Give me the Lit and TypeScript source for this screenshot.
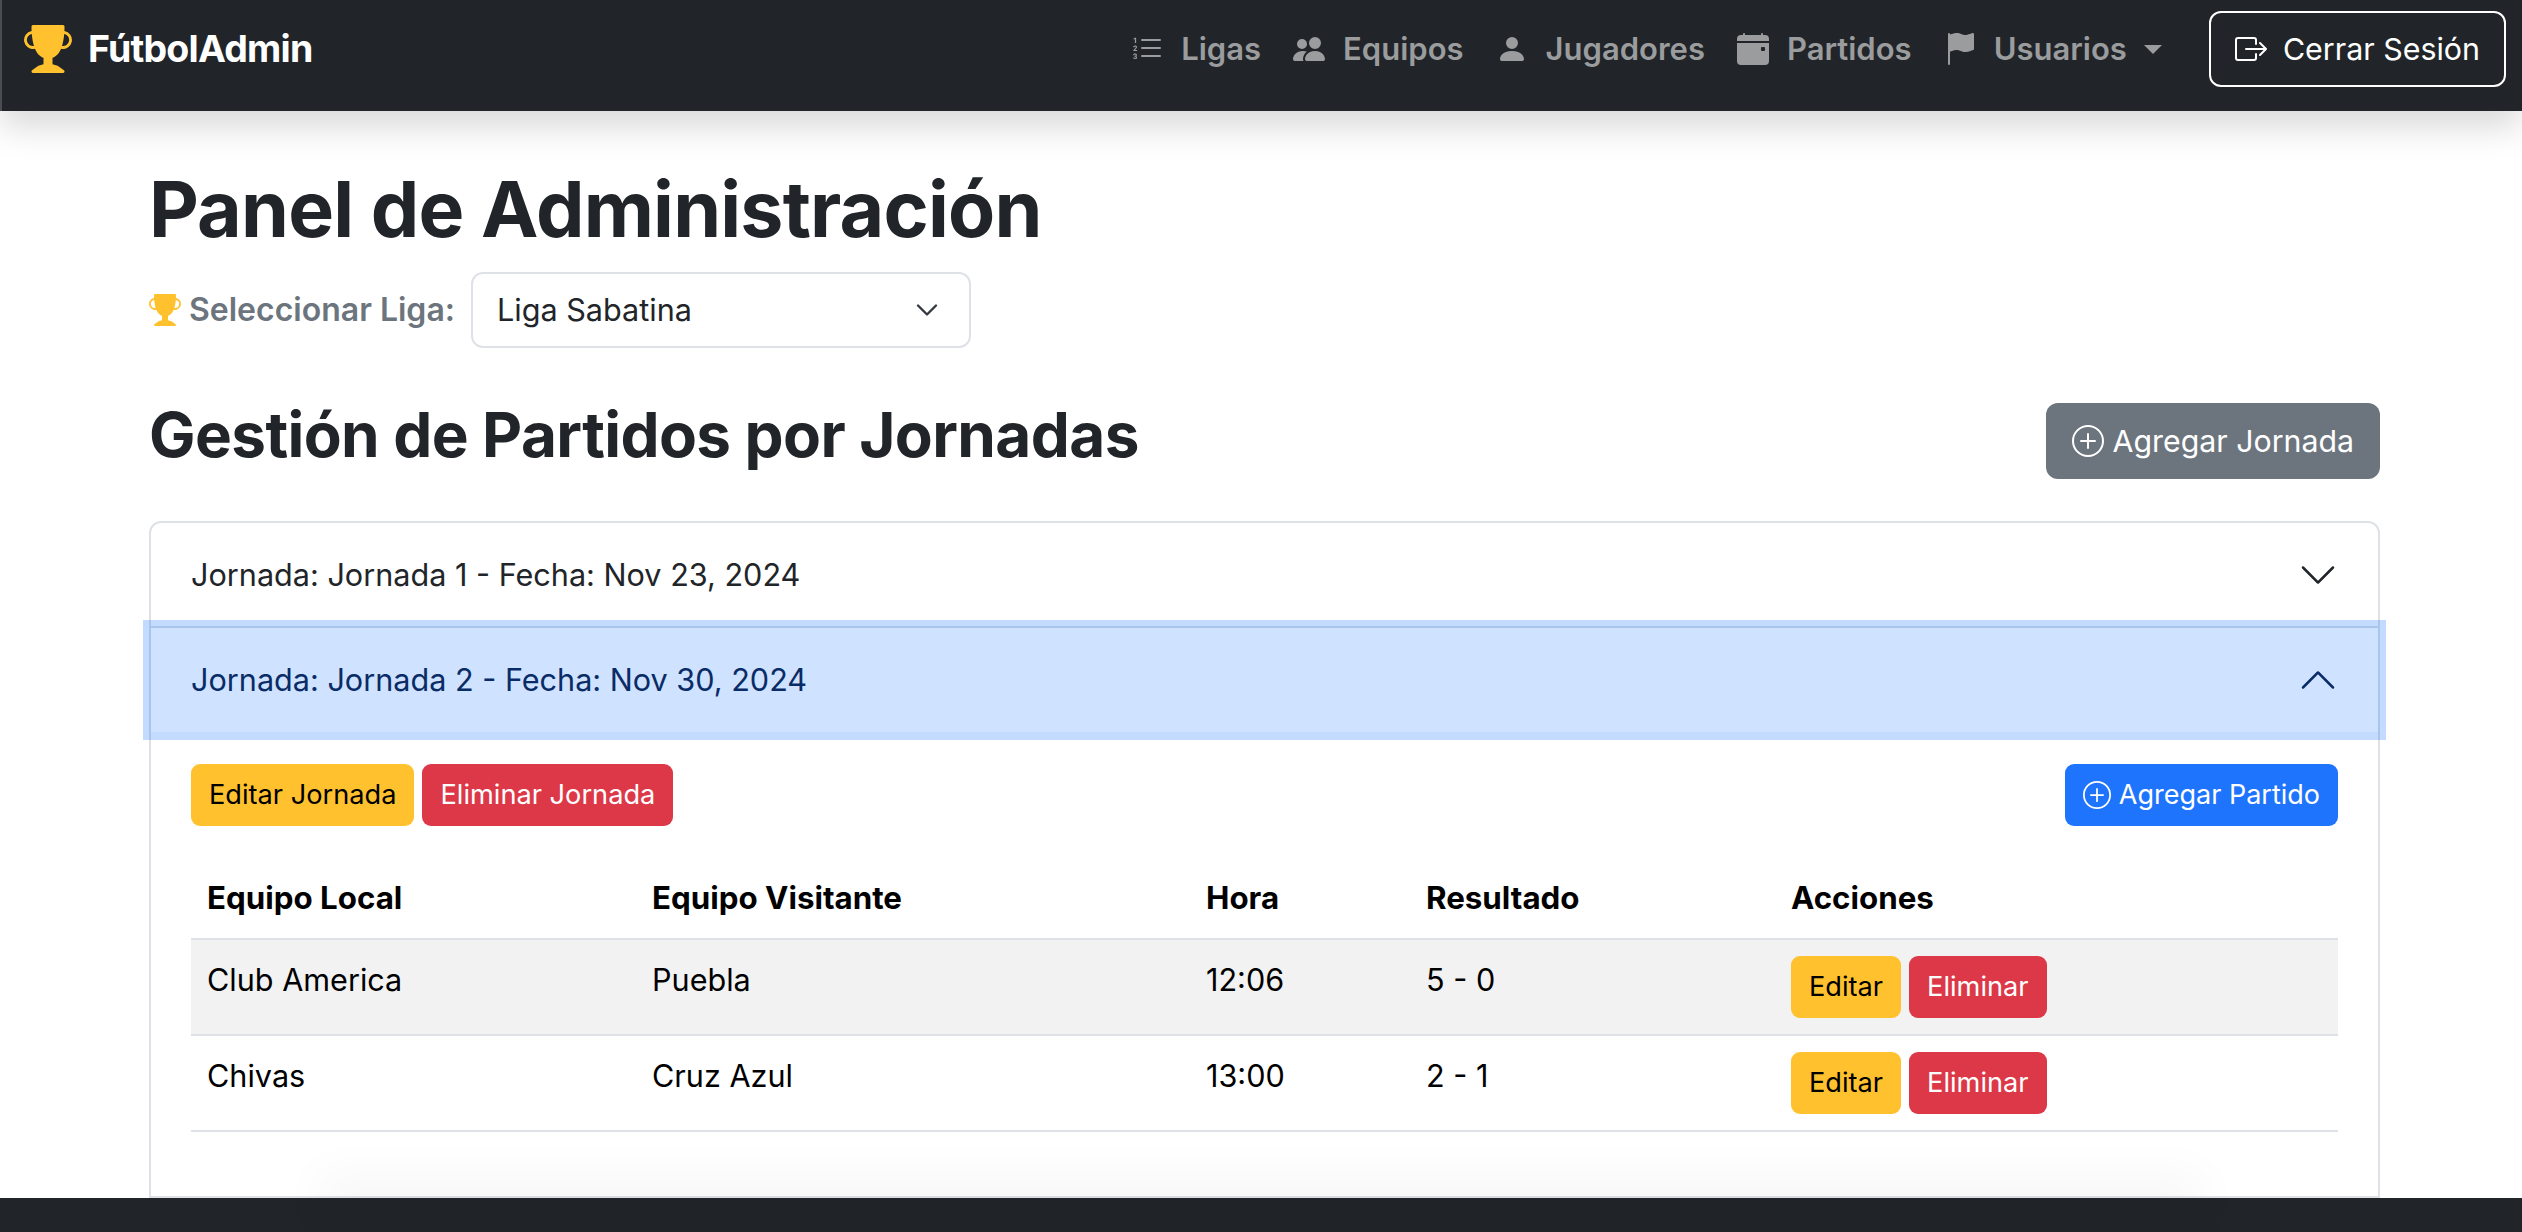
import { LitElement, html, css, svg } from 'lit';
import { customElement } from 'lit/decorators.js';

const ICONS: Record<string, string[]> = {
  trophy: ['M2.5.5A.5.5 0 0 1 3 0h10a.5.5 0 0 1 .5.5q0 .807-.034 1.536a3 3 0 1 1-1.133 5.89c-.79 1.865-1.878 2.777-2.833 3.011v2.173l1.425.356c.194.048.377.135.537.255L13.3 15.1a.5.5 0 0 1-.3.9H3a.5.5 0 0 1-.3-.9l1.838-1.379c.16-.12.343-.207.537-.255L6.5 13.11v-2.173c-.955-.234-2.043-1.146-2.833-3.012a3 3 0 1 1-1.132-5.89A33 33 0 0 1 2.5.5m.099 2.54a2 2 0 0 0 .72 3.935c-.333-1.05-.588-2.346-.72-3.935m10.083 3.935a2 2 0 0 0 .72-3.935c-.133 1.59-.388 2.885-.72 3.935'],
  list: [
    'M5 11.5a.5.5 0 0 1 .5-.5h9a.5.5 0 0 1 0 1h-9a.5.5 0 0 1-.5-.5m0-4a.5.5 0 0 1 .5-.5h9a.5.5 0 0 1 0 1h-9a.5.5 0 0 1-.5-.5m0-4a.5.5 0 0 1 .5-.5h9a.5.5 0 0 1 0 1h-9a.5.5 0 0 1-.5-.5',
    'M1.713 11.865v-.474H2c.217 0 .363-.137.363-.317 0-.185-.158-.31-.361-.31-.223 0-.367.152-.373.31h-.59c.016-.467.373-.787.986-.787.588-.002.954.291.957.703a.595.595 0 0 1-.492.594v.033a.615.615 0 0 1 .569.631c.003.533-.502.8-1.051.8-.656 0-1-.37-1.008-.794h.582c.008.178.186.306.422.309.254 0 .424-.145.422-.35-.002-.195-.155-.348-.414-.348h-.3zm-.004-4.699h-.604v-.035c0-.408.295-.844.958-.844.583 0 .96.326.96.756 0 .389-.257.617-.476.848l-.537.572v.03h1.054V9H1.143v-.395l.957-.99c.138-.142.293-.304.293-.508 0-.18-.147-.32-.342-.32a.33.33 0 0 0-.342.338zM2.564 5h-.635V2.924h-.031l-.598.42v-.567l.629-.443h.635z',
  ],
  people: ['M7 14s-1 0-1-1 1-4 5-4 5 3 5 4-1 1-1 1zm4-6a3 3 0 1 0 0-6 3 3 0 0 0 0 6m-5.784 6A2.24 2.24 0 0 1 5 13c0-1.355.68-2.75 1.936-3.72A6.3 6.3 0 0 0 5 9c-4 0-5 3-5 4s1 1 1 1zM4.5 8a2.5 2.5 0 1 0 0-5 2.5 2.5 0 0 0 0 5'],
  person: ['M3 14s-1 0-1-1 1-4 6-4 6 3 6 4-1 1-1 1zm5-6a3 3 0 1 0 0-6 3 3 0 0 0 0 6'],
  calendar: ['M4 .5a.5.5 0 0 0-1 0V1H2a2 2 0 0 0-2 2v1h16V3a2 2 0 0 0-2-2h-1V.5a.5.5 0 0 0-1 0V1H4zM16 14V5H0v9a2 2 0 0 0 2 2h12a2 2 0 0 0 2-2m-3.5-7h1a.5.5 0 0 1 .5.5v1a.5.5 0 0 1-.5.5h-1a.5.5 0 0 1-.5-.5v-1a.5.5 0 0 1 .5-.5'],
  flag: ['M14.778.085A.5.5 0 0 1 15 .5V8a.5.5 0 0 1-.314.464L14.5 8l.186.464-.003.001-.006.003-.023.009a12 12 0 0 1-.397.15c-.264.095-.631.223-1.047.35-.816.252-1.879.523-2.71.523-.847 0-1.548-.28-2.158-.525l-.028-.01C7.68 8.71 7.14 8.5 6.5 8.5c-.7 0-1.638.23-2.437.477A20 20 0 0 0 3 9.342V15.5a.5.5 0 0 1-1 0V.5a.5.5 0 0 1 1 0v.282c.226-.079.496-.17.79-.26C4.606.272 5.67 0 6.5 0c.84 0 1.524.277 2.121.519l.043.018C9.286.788 9.828 1 10.5 1c.7 0 1.638-.23 2.437-.477a20 20 0 0 0 1.349-.476l.019-.007.004-.002h.001'],
  logout: [
    'M10 12.5a.5.5 0 0 1-.5.5h-8a.5.5 0 0 1-.5-.5v-9a.5.5 0 0 1 .5-.5h8a.5.5 0 0 1 .5.5v2a.5.5 0 0 0 1 0v-2A1.5 1.5 0 0 0 9.5 2h-8A1.5 1.5 0 0 0 0 3.5v9A1.5 1.5 0 0 0 1.5 14h8a1.5 1.5 0 0 0 1.5-1.5v-2a.5.5 0 0 0-1 0z',
    'M15.854 8.354a.5.5 0 0 0 0-.708l-3-3a.5.5 0 0 0-.708.708L14.293 7.5H5.5a.5.5 0 0 0 0 1h8.793l-2.147 2.146a.5.5 0 0 0 .708.708z',
  ],
  plus: [
    'M8 15A7 7 0 1 1 8 1a7 7 0 0 1 0 14m0 1A8 8 0 1 0 8 0a8 8 0 0 0 0 16',
    'M8 4a.5.5 0 0 1 .5.5v3h3a.5.5 0 0 1 0 1h-3v3a.5.5 0 0 1-1 0v-3h-3a.5.5 0 0 1 0-1h3v-3A.5.5 0 0 1 8 4',
  ],
  chevron: ['M1.646 4.646a.5.5 0 0 1 .708 0L8 10.293l5.646-5.647a.5.5 0 0 1 .708.708l-6 6a.5.5 0 0 1-.708 0l-6-6a.5.5 0 0 1 0-.708'],
};

const icon = (name: string, cls = '') => html`<svg class="icon ${cls}" viewBox="0 0 16 16" fill="currentColor">
  ${ICONS[name].map((d) => svg`<path fill-rule="evenodd" d=${d}></path>`)}
</svg>`;

const NAV = [
  { label: 'Ligas', icon: 'list' },
  { label: 'Equipos', icon: 'people' },
  { label: 'Jugadores', icon: 'person' },
  { label: 'Partidos', icon: 'calendar' },
];

const PARTIDOS = [
  { local: 'Club America', visita: 'Puebla', hora: '12:06', res: '5 - 0' },
  { local: 'Chivas', visita: 'Cruz Azul', hora: '13:00', res: '2 - 1' },
];

@customElement('app-root')
export class AppRoot extends LitElement {
  static styles = css`
    :host {
      display: flex;
      flex-direction: column;
      height: 1232px;
      overflow: hidden;
      background: #fff;
      color: #212529;
      font-family: Inter, 'Liberation Sans', sans-serif;
      font-size: 30.6px;
      line-height: 48px;
    }
    .icon {
      width: 32px;
      height: 32px;
      flex: none;
      display: block;
    }
    .navbar {
      position: relative;
      z-index: 5;
      flex: none;
      box-sizing: border-box;
      height: 111px;
      display: flex;
      align-items: flex-start;
      padding: 11px 16px 0 22px;
      background: #212529;
      border-left: 2px solid #4a4e52;
      box-shadow: 0 16px 32px rgba(0, 0, 0, 0.15);
    }
    .brand {
      display: flex;
      align-items: center;
      gap: 16px;
      height: 76px;
      color: #fff;
      font-size: 37.5px;
      font-weight: 700;
      letter-spacing: -0.8px;
    }
    .brand .icon {
      width: 48px;
      height: 48px;
      color: #ffc12d;
    }
    .nav {
      margin-left: auto;
      display: flex;
      align-items: center;
      height: 76px;
    }
    .nav a {
      display: flex;
      align-items: center;
      gap: 18px;
      padding: 0 16px;
      color: #9a9c9e;
      font-weight: 600;
      font-size: 31px;
    }
    .caret {
      width: 0;
      height: 0;
      margin-left: -1px;
      border-top: 9px solid #9a9c9e;
      border-left: 9px solid transparent;
      border-right: 9px solid transparent;
    }
    .btn {
      display: inline-flex;
      align-items: center;
      box-sizing: border-box;
      height: 76px;
      padding: 0 24px;
      border: 2px solid transparent;
      border-radius: 12px;
      background: none;
      font: inherit;
      white-space: nowrap;
    }
    .btn-light {
      margin-left: 31px;
      gap: 16px;
      border-color: #fff;
      color: #fff;
      font-size: 30.4px;
    }
    .btn-gray {
      gap: 9px;
      background: #6c757d;
      color: #fff;
      font-size: 30.3px;
    }
    .btn-sm {
      height: 62px;
      padding: 0 16px;
      border-radius: 9px;
      font-size: 27.2px;
    }
    .btn-sm .icon {
      width: 28px;
      height: 28px;
    }
    .warn {
      background: #ffc12d;
      color: #000;
    }
    .danger {
      background: #dc3848;
      color: #fff;
    }
    .primary {
      gap: 8px;
      background: #1e74fd;
      color: #fff;
      font-size: 27px;
    }
    main {
      flex: 1;
      min-height: 0;
      padding: 50px 142px 0 149px;
    }
    h1 {
      margin: 0 0 15px;
      font-size: 77px;
      line-height: 96px;
      font-weight: 700;
      letter-spacing: -0.8px;
    }
    .liga {
      display: flex;
      align-items: center;
      height: 76px;
      margin-bottom: 55px;
      color: #6c757d;
      font-weight: 600;
      font-size: 32px;
    }
    .liga .icon {
      color: #ffc12d;
      margin-right: 8px;
    }
    .select {
      box-sizing: border-box;
      display: flex;
      align-items: center;
      justify-content: space-between;
      width: 500px;
      height: 76px;
      margin-left: 16px;
      padding: 0 30px 0 24px;
      border: 2px solid #dee2e6;
      border-radius: 12px;
      color: #212529;
      font-weight: 400;
      font-size: 30.6px;
    }
    .select svg {
      width: 24px;
      height: 24px;
      display: block;
    }
    .head {
      display: flex;
      align-items: flex-start;
      justify-content: space-between;
      margin-bottom: 42px;
    }
    h2 {
      margin: 0;
      font-size: 62px;
      line-height: 64px;
      font-weight: 700;
      letter-spacing: -0.6px;
    }
    .accordion {
      border: 2px solid #dee2e6;
      border-radius: 12px 12px 0 0;
    }
    .item + .item {
      border-top: 2px solid #dee2e6;
    }
    .acc-head {
      display: flex;
      align-items: center;
      justify-content: space-between;
      height: 103px;
      padding: 0 40px;
      box-sizing: border-box;
    }
    .acc-head .icon {
      width: 40px;
      height: 40px;
    }
    .acc-head.open {
      position: relative;
      height: 104px;
      background: #cfe2ff;
      color: #0a2c66;
      box-shadow: 0 0 0 8px rgba(13, 110, 253, 0.25);
    }
    .acc-head.open .icon {
      transform: rotate(180deg);
    }
    .acc-body {
      padding: 32px 40px;
    }
    .actions {
      display: flex;
      gap: 8px;
      margin-bottom: 32px;
    }
    .actions .primary {
      margin-left: auto;
    }
    table {
      width: 100%;
      table-layout: fixed;
      border-collapse: collapse;
      margin-bottom: 32px;
      color: #000;
    }
    th,
    td {
      box-sizing: border-box;
      padding: 16px;
      text-align: left;
      vertical-align: top;
      border-bottom: 2px solid #dee2e6;
    }
    th {
      font-weight: 700;
      font-size: 31.3px;
    }
    th:nth-child(1) { width: 445px; }
    th:nth-child(2) { width: 554px; }
    th:nth-child(3) { width: 220px; }
    th:nth-child(4) { width: 365px; }
    tbody tr:nth-child(odd) td {
      background: #f2f2f2;
    }
    .row-btns {
      display: flex;
      gap: 8px;
    }
    footer {
      position: relative;
      z-index: 6;
      flex: none;
      height: 34px;
      background: #212529;
    }
    footer::before {
      content: '';
      position: absolute;
      top: 0;
      left: 340px;
      right: 340px;
      height: 1px;
      box-shadow: 0 0 50px 20px rgba(0, 0, 0, 0.045);
    }
  `;

  render() {
    return html`
      <header class="navbar">
        <div class="brand">${icon('trophy')}<span>FútbolAdmin</span></div>
        <nav class="nav">
          ${NAV.map((n) => html`<a>${icon(n.icon)}<span>${n.label}</span></a>`)}
          <a>${icon('flag')}<span>Usuarios</span><i class="caret"></i></a>
        </nav>
        <button class="btn btn-light">${icon('logout')}Cerrar Sesión</button>
      </header>
      <main>
        <h1>Panel de Administración</h1>
        <div class="liga">
          ${icon('trophy')}<span>Seleccionar Liga:</span>
          <div class="select">
            <span>Liga Sabatina</span>
            <svg viewBox="0 0 16 16" fill="none" stroke="#343a40" stroke-width="1.6" stroke-linecap="round" stroke-linejoin="round"><path d="m2 5 6 6 6-6"></path></svg>
          </div>
        </div>
        <div class="head">
          <h2>Gestión de Partidos por Jornadas</h2>
          <button class="btn btn-gray">${icon('plus')}Agregar Jornada</button>
        </div>
        <section class="accordion">
          <div class="item">
            <div class="acc-head"><span>Jornada: Jornada 1 - Fecha: Nov 23, 2024</span>${icon('chevron')}</div>
          </div>
          <div class="item">
            <div class="acc-head open"><span>Jornada: Jornada 2 - Fecha: Nov 30, 2024</span>${icon('chevron')}</div>
            <div class="acc-body">
              <div class="actions">
                <button class="btn btn-sm warn">Editar Jornada</button>
                <button class="btn btn-sm danger">Eliminar Jornada</button>
                <button class="btn btn-sm primary">${icon('plus')}Agregar Partido</button>
              </div>
              <table>
                <thead>
                  <tr><th>Equipo Local</th><th>Equipo Visitante</th><th>Hora</th><th>Resultado</th><th>Acciones</th></tr>
                </thead>
                <tbody>
                  ${PARTIDOS.map(
                    (p) => html`<tr>
                      <td>${p.local}</td>
                      <td>${p.visita}</td>
                      <td>${p.hora}</td>
                      <td>${p.res}</td>
                      <td>
                        <div class="row-btns">
                          <button class="btn btn-sm warn">Editar</button>
                          <button class="btn btn-sm danger">Eliminar</button>
                        </div>
                      </td>
                    </tr>`
                  )}
                </tbody>
              </table>
            </div>
          </div>
        </section>
      </main>
      <footer></footer>
    `;
  }
}
